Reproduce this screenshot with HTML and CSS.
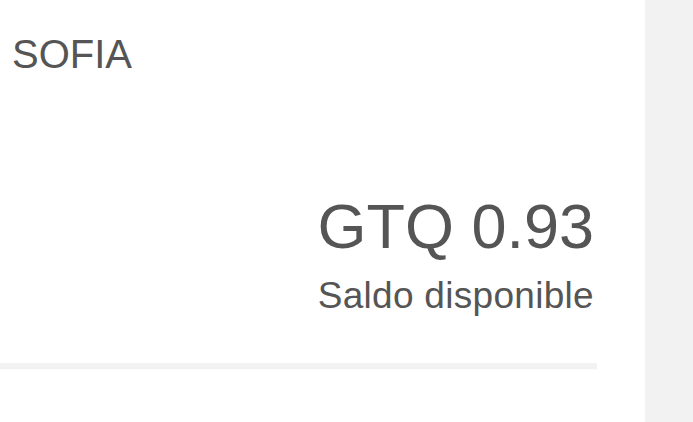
FILE: index.html
```html
<!DOCTYPE html>
<html>
<head>
    <title>Saldo</title>
    <link rel="stylesheet" href="styles.css">
</head>
<body>
    <div class="layout">
        <div class="main">
            <div class="user-name">SOFIA</div>
            <div class="balance">
                <div class="balance-amount">GTQ 0.93</div>
                <div class="balance-label">Saldo disponible</div>
            </div>
            <div class="divider"></div>
        </div>
        <div class="side"></div>
    </div>
</body>
</html>
```

FILE: styles.css
```css
body {
    margin: 0;
    font-family: "Liberation Sans", Arial, sans-serif;
    color: #555555;
    background-color: #ffffff;
}

.layout {
    display: flex;
    height: 100vh;
}

.main {
    width: 645px;
    background-color: #ffffff;
}

.side {
    flex: 1;
    background-color: #f2f2f2;
}

.user-name {
    font-size: 40px;
    line-height: 40px;
    padding: 34px 0 0 12px;
}

.balance {
    width: 597px;
    display: flex;
    flex-direction: column;
    align-items: flex-end;
    margin-top: 121px;
}

.balance-amount {
    font-size: 63px;
    line-height: 63px;
    padding-right: 3px;
}

.balance-label {
    font-size: 37px;
    line-height: 37px;
    margin-top: 19px;
    padding-right: 3px;
    letter-spacing: 0.3px;
}

.divider {
    width: 597px;
    height: 6px;
    margin-top: 49px;
    background-color: #f2f2f2;
    border-bottom: 1px solid #fbfbfb;
}
```
